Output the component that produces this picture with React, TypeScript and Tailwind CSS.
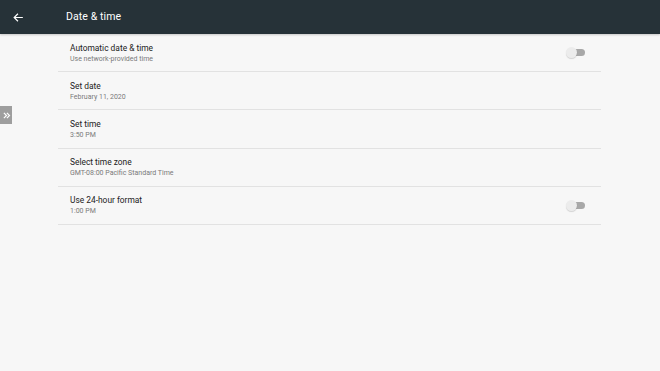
import React from "react";

const rows = [
  { title: "Automatic date & time", sub: "Use network-provided time", sw: true },
  { title: "Set date", sub: "February 11, 2020", sw: false },
  { title: "Set time", sub: "3:50 PM", sw: false },
  { title: "Select time zone", sub: "GMT-08:00 Pacific Standard Time", sw: false },
  { title: "Use 24-hour format", sub: "1:00 PM", sw: true },
];

function Switch() {
  return (
    <div className="relative w-[19px] h-[11px] mr-[16px]">
      <div className="absolute left-[5px] top-[2px] w-[14px] h-[7px] rounded-full bg-[#a8a8a8]" />
      <div className="absolute left-0 top-0 w-[11px] h-[11px] rounded-full bg-[#ececec] shadow-[0_1px_1px_rgba(0,0,0,0.15)]" />
    </div>
  );
}

export default function App() {
  return (
    <div className="relative w-[660px] h-[371px] bg-[#f7f7f7] overflow-hidden" style={{ fontFamily: "Roboto, 'Noto Sans', sans-serif" }}>
      <div className="h-[34px] bg-[#263238] flex items-center shadow-[0_1px_2px_rgba(0,0,0,0.2)]">
        <svg className="ml-[12px]" width="13" height="13" viewBox="0 0 24 24" fill="none" stroke="#ffffff" strokeWidth="2.2">
          <path d="M20 12H4M11 5l-7 7 7 7" />
        </svg>
        <span className="ml-[41px] text-[10.5px] text-white tracking-[0.1px]">Date &amp; time</span>
      </div>
      <div className="ml-[58px] w-[543px]">
        {rows.map((r) => (
          <div key={r.title} className="h-[38.2px] border-b border-[#e2e2e2] flex items-center">
            <div className="flex-1 pl-[12px] flex flex-col">
              <span className="text-[8.4px] leading-[12px] text-[#222222]">{r.title}</span>
              <span className="text-[7px] leading-[10px] text-[#7a7a7a]">{r.sub}</span>
            </div>
            {r.sw && <Switch />}
          </div>
        ))}
      </div>
      <div className="absolute left-0 top-[106px] w-[12px] h-[18px] bg-[#9e9e9e] flex items-center justify-center">
        <svg width="9" height="9" viewBox="0 0 24 24" fill="none" stroke="#ffffff" strokeWidth="3.2">
          <path d="M5 5l7 7-7 7M13 5l7 7-7 7" />
        </svg>
      </div>
    </div>
  );
}
